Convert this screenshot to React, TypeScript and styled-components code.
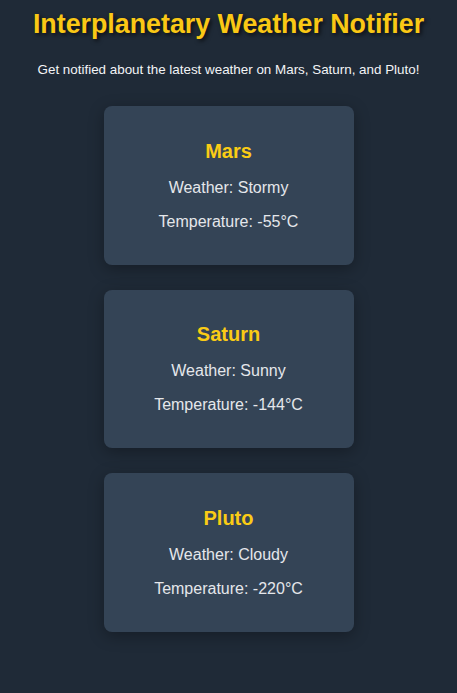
import React from "react";
import styled, { createGlobalStyle } from "styled-components";

const Global = createGlobalStyle`
  html, body { margin: 0; padding: 0; background: #1f2a37; }
  body { font-family: "Liberation Sans", Arial, sans-serif; }
`;

const Page = styled.div`
  min-height: 693px;
  background: #1f2a37;
  color: #f3f4f6;
  display: flex;
  flex-direction: column;
  align-items: center;
  padding-top: 8px;
  box-sizing: border-box;
`;

const Title = styled.h1`
  margin: 0;
  font-size: 26.8px;
  line-height: 32px;
  font-weight: 700;
  color: #fac815;
  text-shadow: 2px 2px 4px rgba(0, 0, 0, 0.7);
`;

const Subtitle = styled.p`
  margin: 22px 0 0;
  font-size: 13.4px;
  line-height: 16px;
  color: #f3f4f6;
`;

const List = styled.div`
  margin-top: 28px;
  display: flex;
  flex-direction: column;
  gap: 25px;
`;

const Card = styled.div`
  width: 250px;
  box-sizing: border-box;
  padding: 20px;
  background: #344456;
  border-radius: 8px;
  box-shadow: 0 4px 16px rgba(0, 0, 0, 0.3);
  text-align: center;
`;

const Planet = styled.h2`
  margin: 13.6px 0 16px;
  font-size: 20px;
  line-height: 23px;
  font-weight: 700;
  color: #facc15;
`;

const Info = styled.p`
  margin: 16px 0;
  font-size: 16px;
  line-height: 18px;
  color: #e5e7eb;
  &:last-child { margin-bottom: 14px; }
`;

const planets = [
  { name: "Mars", weather: "Stormy", temp: "-55°C" },
  { name: "Saturn", weather: "Sunny", temp: "-144°C" },
  { name: "Pluto", weather: "Cloudy", temp: "-220°C" },
];

export default function App() {
  return (
    <>
      <Global />
      <Page>
        <Title>Interplanetary Weather Notifier</Title>
        <Subtitle>Get notified about the latest weather on Mars, Saturn, and Pluto!</Subtitle>
        <List>
          {planets.map((p) => (
            <Card key={p.name}>
              <Planet>{p.name}</Planet>
              <Info>Weather: {p.weather}</Info>
              <Info>Temperature: {p.temp}</Info>
            </Card>
          ))}
        </List>
      </Page>
    </>
  );
}
